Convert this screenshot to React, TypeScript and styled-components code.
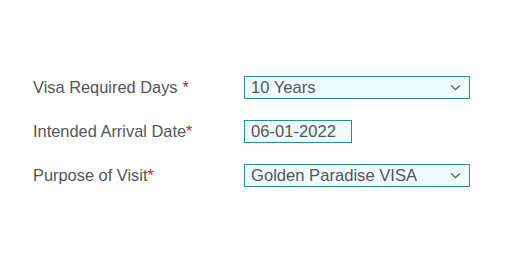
import React from "react";
import styled, { createGlobalStyle } from "styled-components";

const Global = createGlobalStyle`
  html, body { margin: 0; padding: 0; background: #ffffff; }
  body { font-family: "Liberation Sans", Arial, sans-serif; }
`;

const Form = styled.div`
  padding: 76px 0 0 33px;
  display: flex;
  flex-direction: column;
  gap: 21px;
`;

const Row = styled.div`
  display: grid;
  grid-template-columns: 211px auto;
  align-items: center;
  height: 23px;
`;

const Label = styled.div`
  font-size: 16.4px;
  color: #555555;
  white-space: nowrap;
  line-height: 23px;
`;

const Star = styled.span<{ $gap?: boolean }>`
  color: #e0161b;
  margin-left: ${(p) => (p.$gap ? "5px" : "0")};
`;

const Field = styled.div<{ $w: number }>`
  box-sizing: border-box;
  width: ${(p) => p.$w}px;
  height: 23px;
  border: 1px solid #2b8c99;
  background: #eefcfe;
  display: flex;
  align-items: center;
  justify-content: space-between;
  padding: 0 8px 0 6px;
  font-size: 16.6px;
  color: #555555;
`;

const Chevron = () => (
  <svg width="11" height="8" viewBox="0 0 11 8">
    <path d="M1 1.5 L5.5 5.5 L10 1.5" fill="none" stroke="#666" strokeWidth="1.4" />
  </svg>
);

export default function App() {
  return (
    <>
      <Global />
      <Form>
        <Row>
          <Label>
            Visa Required Days<Star $gap>*</Star>
          </Label>
          <Field $w={226}>
            <span>10 Years</span>
            <Chevron />
          </Field>
        </Row>
        <Row>
          <Label>
            Intended Arrival Date<Star>*</Star>
          </Label>
          <Field $w={108}>
            <span>06-01-2022</span>
          </Field>
        </Row>
        <Row>
          <Label>
            Purpose of Visit<Star>*</Star>
          </Label>
          <Field $w={226}>
            <span>Golden Paradise VISA</span>
            <Chevron />
          </Field>
        </Row>
      </Form>
    </>
  );
}
